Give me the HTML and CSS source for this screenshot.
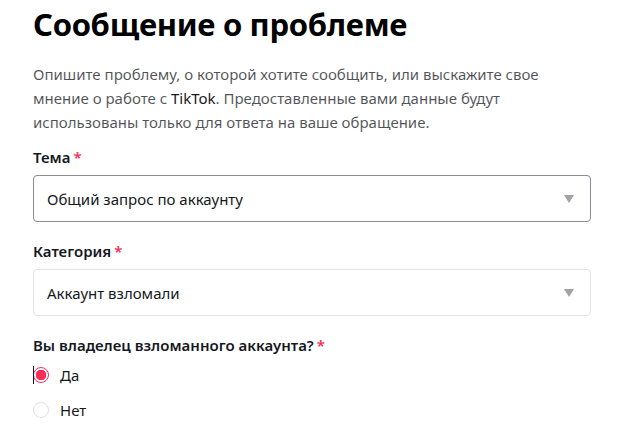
FILE: index.html
```html
<!DOCTYPE html>
<html lang="ru">
<head>
<meta charset="utf-8">
<link rel="stylesheet" href="styles.css">
</head>
<body>
<main class="page">
  <h1 class="title">Сообщение о проблеме</h1>
  <p class="desc">Опишите проблему, о которой хотите сообщить, или выскажите свое мнение о работе с <span class="brand">TikTok</span>. Предоставленные вами данные будут использованы только для ответа на ваше обращение.</p>

  <div class="field">
    <div class="label">Тема<span class="req">*</span></div>
    <div class="select focused">
      <span class="value">Общий запрос по аккаунту</span>
      <span class="arrow"></span>
    </div>
  </div>

  <div class="field">
    <div class="label">Категория<span class="req">*</span></div>
    <div class="select">
      <span class="value">Аккаунт взломали</span>
      <span class="arrow"></span>
    </div>
  </div>

  <div class="field radios">
    <div class="label">Вы владелец взломанного аккаунта?<span class="req">*</span></div>
    <label class="radio checked"><span class="dot"><span class="caret"></span></span><span class="rtext">Да</span></label>
    <label class="radio"><span class="dot"></span><span class="rtext">Нет</span></label>
  </div>
</main>
</body>
</html>
```

FILE: styles.css
```css
* { box-sizing: border-box; }
html, body { margin: 0; padding: 0; background: #fff; }
body {
  font-family: "Noto Sans", "Open Sans", "DejaVu Sans", sans-serif;
  color: #161823;
}
.page {
  width: 638px;
  padding: 0 47px 0 33px;
}
.title {
  margin: 0;
  padding-top: 4px;
  font-size: 31px;
  line-height: 40px;
  font-weight: 700;
  color: #000;
  letter-spacing: -0.3px;
}
.desc {
  margin: 18px 0 0;
  font-size: 15px;
  line-height: 24px;
  color: rgba(22, 24, 35, 0.75);
}
.brand { color: #161823; }
.field { margin-top: 12px; }
.field + .field { margin-top: 18px; }
.label {
  font-size: 15px;
  font-weight: 600;
  line-height: 22px;
  margin-bottom: 7px;
}
.req {
  color: #fe2c55;
  margin-left: 3px;
}
.select {
  height: 47px;
  border: 1px solid #e3e3e4;
  border-radius: 4px;
  display: flex;
  align-items: center;
  justify-content: space-between;
  padding: 0 16px 0 13px;
  font-size: 15px;
}
.select.focused { border-color: #8a8b91; }
.arrow {
  width: 0;
  height: 0;
  border-left: 5.5px solid transparent;
  border-right: 5.5px solid transparent;
  border-top: 8px solid #a3a3a6;
}
.radios { margin-top: 16px; }
.radios .label { margin-bottom: 1px; }
.radio {
  display: flex;
  align-items: center;
  height: 35px;
  font-size: 15px;
}
.dot {
  position: relative;
  width: 16px;
  height: 16px;
  border-radius: 50%;
  border: 1px solid #e0e0e2;
  margin-right: 11px;
}
.radio.checked .dot {
  border: 1.5px solid #fe2c55;
  background: radial-gradient(circle, #fe2c55 0 5px, #fff 5.5px);
}
.caret {
  position: absolute;
  left: -1.5px;
  top: -2px;
  width: 1px;
  height: 18px;
  background: #161823;
}
```
